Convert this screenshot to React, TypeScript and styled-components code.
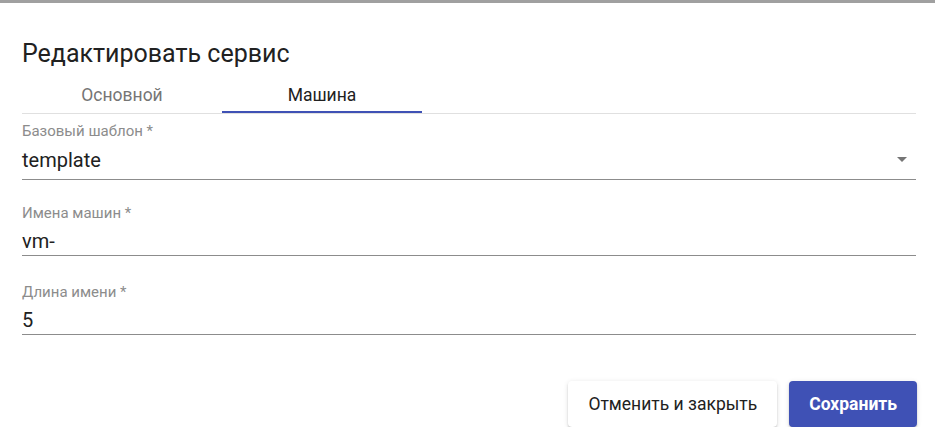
import React from "react";
import styled, { createGlobalStyle } from "styled-components";

const Global = createGlobalStyle`
  html, body { margin: 0; padding: 0; background: #fff; }
  body { font-family: Roboto, "Noto Sans", Arial, sans-serif; color: #212121; }
  * { box-sizing: border-box; }
`;

const TopBar = styled.div`
  height: 3px;
  background: #a0a0a0;
  margin-right: 2px;
`;

const Dialog = styled.div`
  padding: 0 21px 0 22px;
  display: flex;
  flex-direction: column;
`;

const Title = styled.h2`
  margin: 35px 0 0;
  font-size: 25px;
  font-weight: 400;
  line-height: 32px;
  color: #212121;
`;

const TabBar = styled.div`
  display: flex;
  border-bottom: 1px solid #e0e0e0;
  margin-top: 9px;
`;

const Tab = styled.div<{ $active?: boolean }>`
  width: 200px;
  height: 34px;
  display: flex;
  align-items: center;
  justify-content: center;
  font-size: 17.5px;
  color: ${(p) => (p.$active ? "#212121" : "#757575")};
  border-bottom: 2px solid ${(p) => (p.$active ? "#3f51b5" : "transparent")};
`;

const Fields = styled.div`
  display: flex;
  flex-direction: column;
  margin-top: 7px;
`;

const Field = styled.div<{ $select?: boolean }>`
  display: flex;
  flex-direction: column;
  margin-bottom: ${(p) => (p.$select ? 23 : 26)}px;
  &:last-child { margin-bottom: 0; }
`;

const Label = styled.label`
  font-size: 15px;
  line-height: 20px;
  color: #8c8c8c;
`;

const ValueRow = styled.div<{ $select?: boolean }>`
  display: flex;
  align-items: flex-end;
  justify-content: space-between;
  border-bottom: 1px solid #8c8c8c;
  height: ${(p) => (p.$select ? 39 : 33)}px;
  padding-bottom: ${(p) => (p.$select ? 7 : 2)}px;
`;

const Value = styled.span`
  font-size: 20px;
  line-height: 24px;
  color: #212121;
`;

const Arrow = styled.span`
  width: 0;
  height: 0;
  border-left: 5px solid transparent;
  border-right: 5px solid transparent;
  border-top: 5px solid #757575;
  margin: 0 9px 10px 0;
`;

const Actions = styled.div`
  display: flex;
  justify-content: flex-end;
  gap: 12px;
  margin: 46px -1px 0 0;
`;

const Button = styled.button<{ $primary?: boolean }>`
  height: 46px;
  padding: 0 20px;
  border: none;
  border-radius: 4px;
  font-family: Roboto, Arial, sans-serif;
  font-size: 17.5px;
  font-weight: ${(p) => (p.$primary ? 700 : 400)};
  color: ${(p) => (p.$primary ? "#fff" : "#212121")};
  background: ${(p) => (p.$primary ? "#3f51b5" : "#fff")};
  box-shadow: 0 3px 1px -2px rgba(0,0,0,0.2), 0 2px 2px 0 rgba(0,0,0,0.14), 0 1px 5px 0 rgba(0,0,0,0.12);
`;

export default function App() {
  return (
    <>
      <Global />
      <TopBar />
      <Dialog>
        <Title>Редактировать сервис</Title>
        <TabBar>
          <Tab>Основной</Tab>
          <Tab $active>Машина</Tab>
        </TabBar>
        <Fields>
          <Field $select>
            <Label>Базовый шаблон *</Label>
            <ValueRow $select>
              <Value>template</Value>
              <Arrow />
            </ValueRow>
          </Field>
          <Field>
            <Label>Имена машин *</Label>
            <ValueRow>
              <Value>vm-</Value>
            </ValueRow>
          </Field>
          <Field>
            <Label>Длина имени *</Label>
            <ValueRow>
              <Value>5</Value>
            </ValueRow>
          </Field>
        </Fields>
        <Actions>
          <Button>Отменить и закрыть</Button>
          <Button $primary>Сохранить</Button>
        </Actions>
      </Dialog>
    </>
  );
}
